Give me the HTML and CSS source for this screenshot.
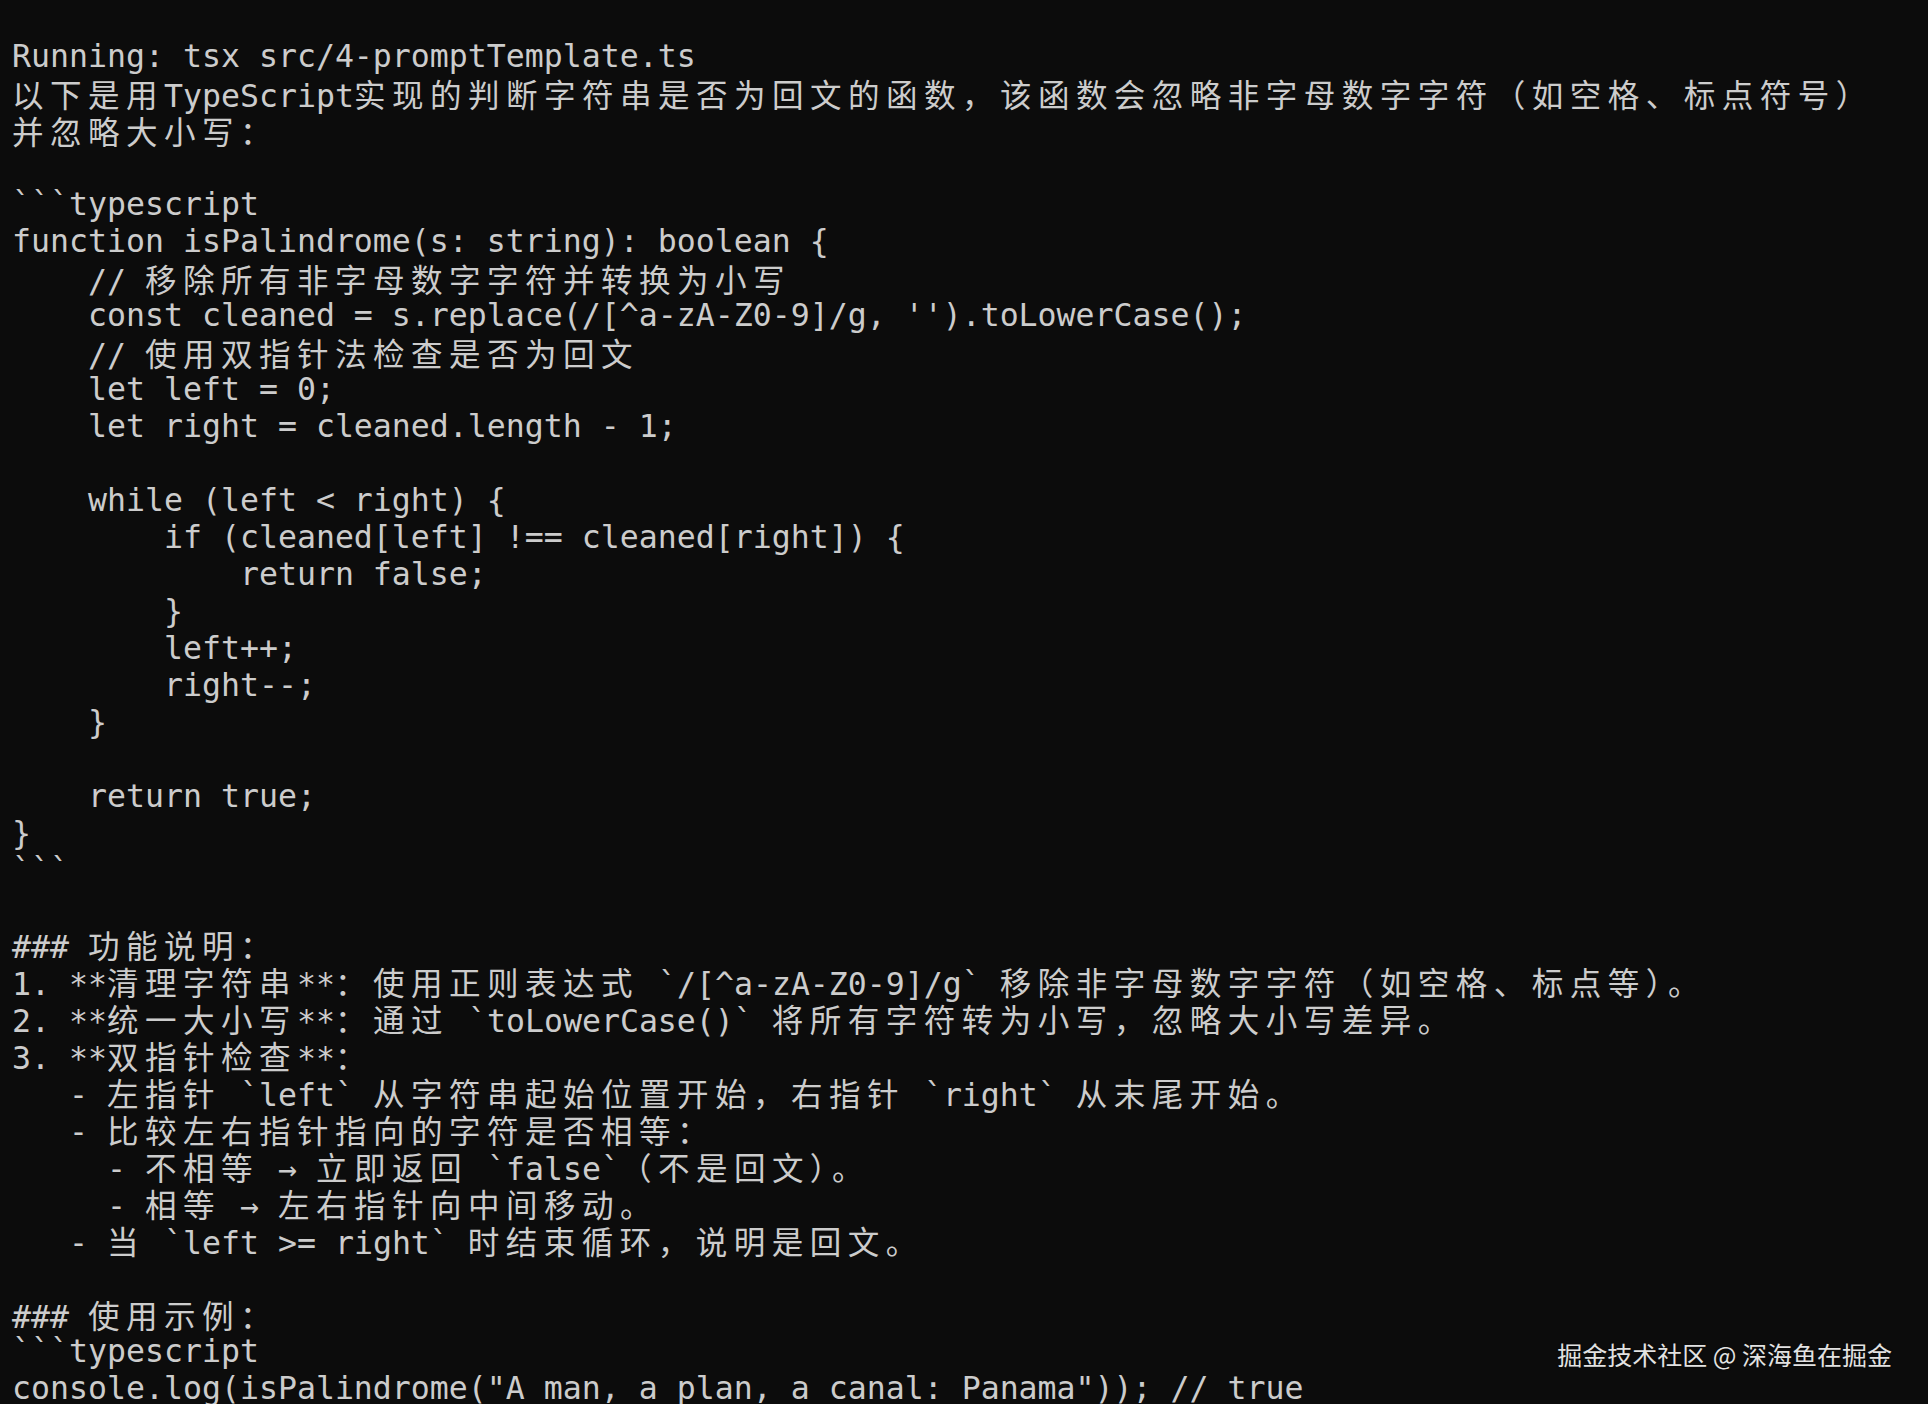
FILE: index.html
```html
<!DOCTYPE html>
<html lang="zh-CN">
<head>
<meta charset="utf-8">
<title>Terminal</title>
<link rel="stylesheet" href="styles.css">
</head>
<body>
<div class="term">
<div class="ln">Running: tsx src/4-promptTemplate.ts</div>
<div class="ln"><span class="w">以下是用</span>TypeScript<span class="w">实现的判断字符串是否为回文的函数，该函数会忽略非字母数字字符（如空格、标点符号）</span></div>
<div class="ln"><span class="w">并忽略大小写：</span></div>
<div class="ln"></div>
<div class="ln">```typescript</div>
<div class="ln">function isPalindrome(s: string): boolean {</div>
<div class="ln">    // <span class="w">移除所有非字母数字字符并转换为小写</span></div>
<div class="ln">    const cleaned = s.replace(/[^a-zA-Z0-9]/g, '').toLowerCase();</div>
<div class="ln">    // <span class="w">使用双指针法检查是否为回文</span></div>
<div class="ln">    let left = 0;</div>
<div class="ln">    let right = cleaned.length - 1;</div>
<div class="ln"></div>
<div class="ln">    while (left &lt; right) {</div>
<div class="ln">        if (cleaned[left] !== cleaned[right]) {</div>
<div class="ln">            return false;</div>
<div class="ln">        }</div>
<div class="ln">        left++;</div>
<div class="ln">        right--;</div>
<div class="ln">    }</div>
<div class="ln"></div>
<div class="ln">    return true;</div>
<div class="ln">}</div>
<div class="ln">```</div>
<div class="ln"></div>
<div class="ln">### <span class="w">功能说明：</span></div>
<div class="ln">1. **<span class="w">清理字符串</span>**<span class="w">：使用正则表达式</span> `/[^a-zA-Z0-9]/g` <span class="w">移除非字母数字字符（如空格、标点等）。</span></div>
<div class="ln">2. **<span class="w">统一大小写</span>**<span class="w">：通过</span> `toLowerCase()` <span class="w">将所有字符转为小写，忽略大小写差异。</span></div>
<div class="ln">3. **<span class="w">双指针检查</span>**<span class="w">：</span></div>
<div class="ln">   - <span class="w">左指针</span> `left` <span class="w">从字符串起始位置开始，右指针</span> `right` <span class="w">从末尾开始。</span></div>
<div class="ln">   - <span class="w">比较左右指针指向的字符是否相等：</span></div>
<div class="ln">     - <span class="w">不相等</span> → <span class="w">立即返回</span> `false`<span class="w">（不是回文）。</span></div>
<div class="ln">     - <span class="w">相等</span> → <span class="w">左右指针向中间移动。</span></div>
<div class="ln">   - <span class="w">当</span> `left &gt;= right` <span class="w">时结束循环，说明是回文。</span></div>
<div class="ln"></div>
<div class="ln">### <span class="w">使用示例：</span></div>
<div class="ln">```typescript</div>
<div class="ln">console.log(isPalindrome("A man, a plan, a canal: Panama")); // true</div>
</div>
<div class="mark">掘金技术社区 @ 深海鱼在掘金</div>
</body>
</html>
```

FILE: styles.css
```css
html, body {
  margin: 0;
  padding: 0;
  background: #0c0c0c;
  overflow: hidden;
}
body {
  width: 1928px;
  height: 1404px;
  position: relative;
}
.term {
  padding: 38px 0 0 12px;
  font-family: "DejaVu Sans Mono", "Noto Sans CJK SC", monospace;
  font-size: 31.55px;
  line-height: 37px;
  color: #cccccc;
}
.ln {
  height: 37px;
  white-space: pre;
}
.w {
  font-family: "Noto Sans CJK SC", sans-serif;
  letter-spacing: 6.45px;
  font-weight: 400;
}
.mark {
  position: absolute;
  right: 36px;
  top: 1336px;
  font-family: "Noto Sans CJK SC", sans-serif;
  font-size: 25px;
  line-height: 36px;
  color: #e2e2e2;
  text-shadow: 0 0 2px rgba(0,0,0,0.6);
}
```
